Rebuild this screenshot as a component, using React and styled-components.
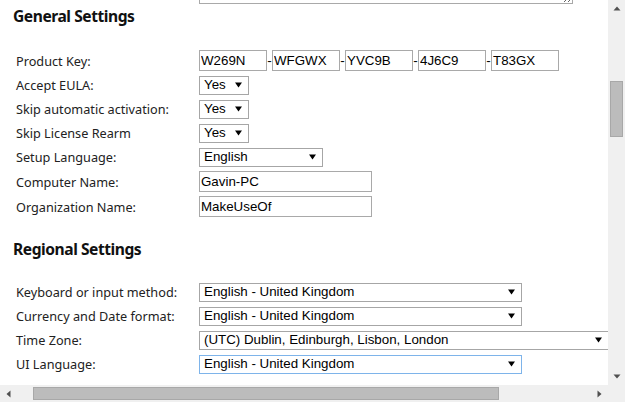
import React from "react";
import styled, { createGlobalStyle } from "styled-components";

const Global = createGlobalStyle`
  html, body { margin: 0; padding: 0; background: #fff; }
  body { width: 625px; height: 402px; overflow: hidden; }
`;

const Frame = styled.div`
  width: 625px;
  height: 402px;
  display: grid;
  grid-template-columns: 608px 17px;
  grid-template-rows: 385px 17px;
  background: #fff;
`;

const Content = styled.div`
  overflow: hidden;
  padding-left: 16px;
  font-family: "Noto Sans", "DejaVu Sans", sans-serif;
  color: #1e1e1e;
`;

const NoteArea = styled.textarea`
  display: block;
  box-sizing: border-box;
  width: 374px;
  height: 41px;
  margin: -37px 0 0 183px;
  border: 1px solid #a9a9a9;
  padding: 2px;
  font-family: "Liberation Sans", Arial, sans-serif;
  font-size: 13.33px;
  resize: both;
  outline: none;
`;

const Heading = styled.h2`
  margin: ${(p) => p.$top}px 0 ${(p) => p.$bottom}px -3px;
  font-size: 15.6px;
  line-height: 20px;
  font-weight: 700;
  color: #111;
  letter-spacing: -0.45px;
`;

const Fields = styled.div`
  display: flex;
  flex-direction: column;
`;

const Row = styled.div`
  display: flex;
  align-items: center;
  min-height: 24px;
`;

const Label = styled.span`
  width: 183px;
  flex: none;
  font-size: 12.7px;
  line-height: 16px;
  color: #222;
`;

const KeyGroup = styled.div`
  display: flex;
  align-items: center;
`;

const TextInput = styled.input`
  box-sizing: border-box;
  width: ${(p) => p.$w}px;
  height: 21px;
  margin: 2px 0;
  padding: 0 1px;
  border: 1px solid #a9a9a9;
  border-radius: 0;
  font-family: "Liberation Sans", Arial, sans-serif;
  font-size: 13.33px;
  color: #000;
  background: #fff;
  outline: none;
`;

const Dash = styled.span`
  width: 5px;
  text-align: center;
  font-family: "Liberation Sans", Arial, sans-serif;
  font-size: 13.33px;
  color: #000;
`;

const SelectBox = styled.div`
  box-sizing: border-box;
  flex: none;
  width: ${(p) => p.$w}px;
  height: 19px;
  display: flex;
  align-items: center;
  justify-content: space-between;
  padding: 0 6px 1px 4px;
  border: 1px solid ${(p) => (p.$focus ? "#7eb4ea" : "#a6a6a6")};
  background: #fff;
  font-family: "Liberation Sans", Arial, sans-serif;
  font-size: 13.33px;
  color: #000;
  white-space: nowrap;
`;

const Caret = styled.svg`
  flex: none;
  width: 7px;
  height: 6px;
`;

const VBar = styled.div`
  grid-row: 1;
  grid-column: 2;
  background: #f0f0f0;
  display: flex;
  flex-direction: column;
`;

const HBar = styled.div`
  grid-row: 2;
  grid-column: 1;
  background: #f0f0f0;
  display: flex;
`;

const Corner = styled.div`
  grid-row: 2;
  grid-column: 2;
  background: #f0f0f0;
`;

const ArrowBtn = styled.div`
  width: 17px;
  height: 17px;
  flex: none;
  display: flex;
  align-items: center;
  justify-content: center;
`;

const VTrack = styled.div`
  flex: 1;
  padding: ${(p) => p.$offset}px 2px 0 2px;
`;

const HTrack = styled.div`
  flex: 1;
  display: flex;
  align-items: center;
  padding-left: ${(p) => p.$offset}px;
`;

const Thumb = styled.div`
  box-sizing: border-box;
  background: #bcbcbc;
  border: 1px solid #a8a8a8;
  width: ${(p) => p.$w}px;
  height: ${(p) => p.$h}px;
`;

const Select = ({ w, value, focus }) => (
  <SelectBox $w={w} $focus={focus}>
    <span>{value}</span>
    <Caret viewBox="0 0 7 6">
      <path d="M0 0.5H7L3.5 5.5Z" fill="#000" />
    </Caret>
  </SelectBox>
);

const Tri = ({ dir }) => {
  const paths = {
    up: "M0.5 4.5H7.5L4 0.5Z",
    down: "M0.5 0.5H7.5L4 4.5Z",
    left: "M4.5 0.5V7.5L0.5 4Z",
    right: "M0.5 0.5V7.5L4.5 4Z",
  };
  const vertical = dir === "up" || dir === "down";
  return (
    <svg
      width={vertical ? 8 : 5}
      height={vertical ? 5 : 8}
      viewBox={vertical ? "0 0 8 5" : "0 0 5 8"}
    >
      <path d={paths[dir]} fill="#505050" />
    </svg>
  );
};

const keyParts = ["W269N", "WFGWX", "YVC9B", "4J6C9", "T83GX"];

export default function App() {
  return (
    <>
      <Global />
      <Frame>
        <Content>
          <NoteArea readOnly defaultValue="" />
          <Heading $top={2} $bottom={22}>General Settings</Heading>
          <Fields>
            <Row>
              <Label>Product Key:</Label>
              <KeyGroup>
                {keyParts.map((k, i) => (
                  <React.Fragment key={k}>
                    {i > 0 && <Dash>-</Dash>}
                    <TextInput $w={68} readOnly value={k} />
                  </React.Fragment>
                ))}
              </KeyGroup>
            </Row>
            <Row>
              <Label>Accept EULA:</Label>
              <Select w={50} value="Yes" />
            </Row>
            <Row>
              <Label>Skip automatic activation:</Label>
              <Select w={50} value="Yes" />
            </Row>
            <Row>
              <Label>Skip License Rearm</Label>
              <Select w={50} value="Yes" />
            </Row>
            <Row>
              <Label>Setup Language:</Label>
              <Select w={124} value="English" />
            </Row>
            <Row>
              <Label>Computer Name:</Label>
              <TextInput $w={173} readOnly value="Gavin-PC" />
            </Row>
            <Row>
              <Label>Organization Name:</Label>
              <TextInput $w={173} readOnly value="MakeUseOf" />
            </Row>
          </Fields>
          <Heading $top={20} $bottom={21}>Regional Settings</Heading>
          <Fields>
            <Row>
              <Label>Keyboard or input method:</Label>
              <Select w={323} value="English - United Kingdom" />
            </Row>
            <Row>
              <Label>Currency and Date format:</Label>
              <Select w={323} value="English - United Kingdom" />
            </Row>
            <Row>
              <Label>Time Zone:</Label>
              <Select w={410} value="(UTC) Dublin, Edinburgh, Lisbon, London" />
            </Row>
            <Row>
              <Label>UI Language:</Label>
              <Select w={323} value="English - United Kingdom" focus />
            </Row>
          </Fields>
        </Content>
        <VBar>
          <ArrowBtn><Tri dir="up" /></ArrowBtn>
          <VTrack $offset={64}>
            <Thumb $w={13} $h={56} />
          </VTrack>
          <ArrowBtn><Tri dir="down" /></ArrowBtn>
        </VBar>
        <HBar>
          <ArrowBtn><Tri dir="left" /></ArrowBtn>
          <HTrack $offset={16}>
            <Thumb $w={466} $h={13} />
          </HTrack>
          <ArrowBtn><Tri dir="right" /></ArrowBtn>
        </HBar>
        <Corner />
      </Frame>
    </>
  );
}
